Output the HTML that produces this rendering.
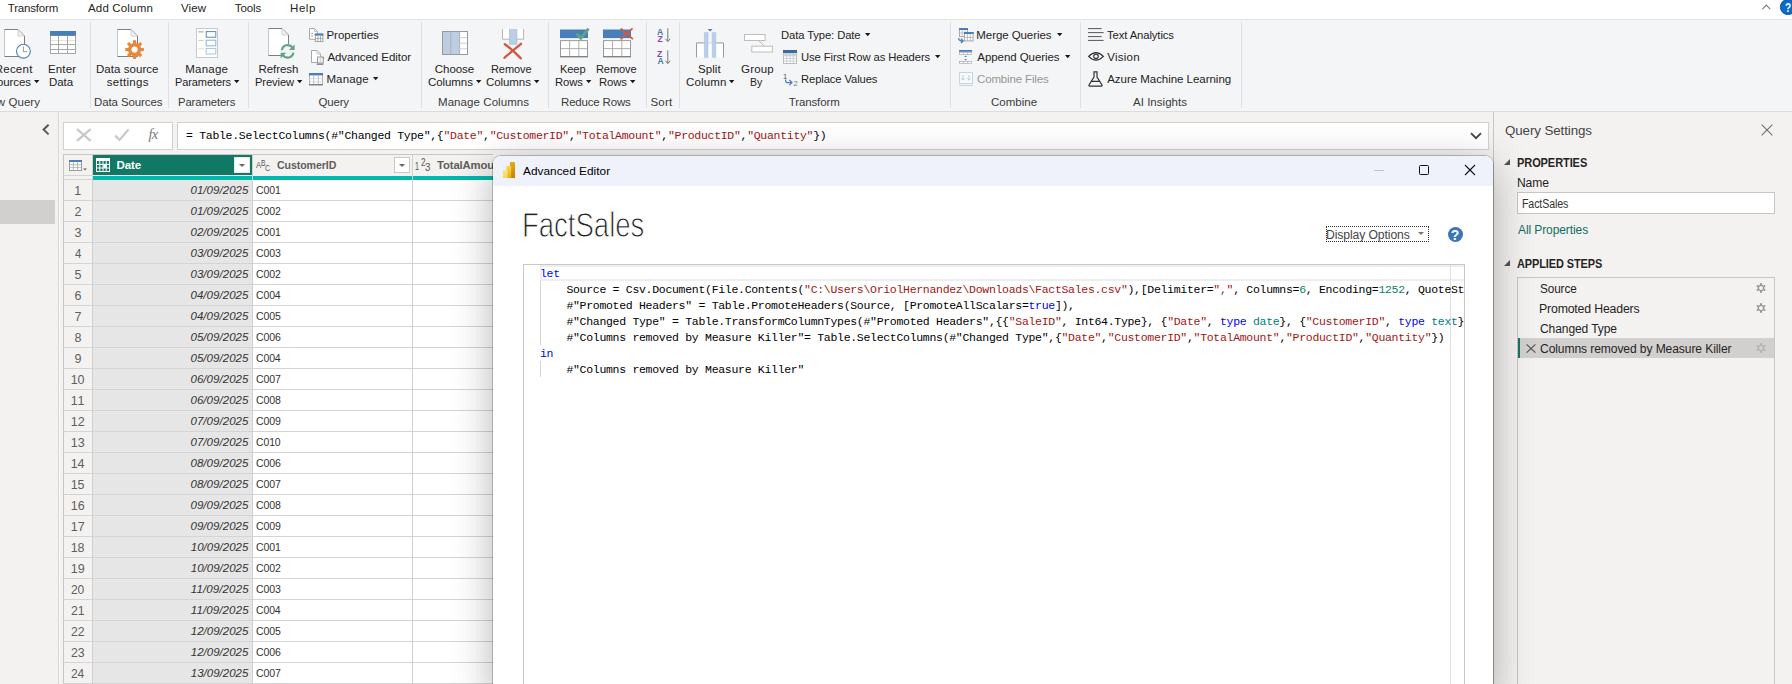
<!DOCTYPE html>
<html lang="en"><head><meta charset="utf-8"><title>Power Query Editor - Advanced Editor</title>
<style>
*{box-sizing:border-box;margin:0;padding:0}
html,body{width:1792px;height:684px;overflow:hidden;background:#f3f2f1}
body{position:relative;font-family:"Liberation Sans",sans-serif;font-size:12px;color:#252423}
.a{position:absolute}
.t{position:absolute;white-space:pre;line-height:20px;z-index:2}
.t.z{z-index:12}
#tabs{left:0;top:0;width:1792px;height:20px;background:#fff;border-bottom:1px solid #e3e3e3}
#ribbon{left:0;top:20px;width:1792px;height:92px;background:#f4f5f7;border-bottom:1px solid #dcdcdc}
.sep{position:absolute;top:22px;width:1px;height:86px;background:#e0e0e2}
.dd{position:absolute;width:0;height:0;border-left:2.5px solid transparent;border-right:2.5px solid transparent;border-top:3px solid #252423}
svg{position:absolute;overflow:visible}
/* formula */
.fbox{position:absolute;top:122px;height:28px;background:#fff;border:1px solid #d2d0ce}
.code{font-family:"Liberation Mono",monospace;font-size:11.5px;letter-spacing:-0.3px;white-space:pre;line-height:16px;color:#000}
.s{color:#a31515}.k{color:#0000ff}.n{color:#098658}.y{color:#008080}
/* grid */
#grid{left:63px;top:154px;width:430px;height:530px;background:#fff;overflow:hidden}
.hl{position:absolute;left:0;width:430px;height:1px;background:#d4d4d4}
.vl{position:absolute;top:0;width:1px;height:530px;background:#d0d0d0}
/* dialog */
#dlg{left:493px;top:156px;width:1000px;height:540px;background:#fff;border-radius:8px 8px 0 0;z-index:10;
 box-shadow:0 0 0 1px rgba(0,0,0,.22),0 10px 42px rgba(0,0,0,.30);overflow:hidden}
#dlgtitle{left:0;top:0;width:1000px;height:30px;background:#eff2fa}
#editor{left:30px;top:108px;width:942px;height:440px;border:1px solid #c8c8c8;overflow:hidden;background:#fff}
/* panel */
#panel{left:1493px;top:112px;width:299px;height:572px;background:#f3f2f1;border-left:1px solid #c8c6c4}
.thin{-webkit-text-stroke:1px #fff;paint-order:fill stroke}

</style></head>
<body>
<div class="a" id="tabs"></div>
<div class="a" id="ribbon"></div>
<div class="sep" style="left:90px"></div><div class="sep" style="left:168px"></div><div class="sep" style="left:248px"></div><div class="sep" style="left:421px"></div><div class="sep" style="left:548px"></div><div class="sep" style="left:646px"></div><div class="sep" style="left:679px"></div><div class="sep" style="left:950px"></div><div class="sep" style="left:1080px"></div><div class="sep" style="left:1241px"></div><svg style="left:34.1px;top:80px" width="6" height="4" viewBox="0 0 6 4"><path d="M0 0 H5.4 L2.7 3.2 Z" fill="#1a1a1a"/></svg><svg style="left:233.9px;top:80px" width="6" height="4" viewBox="0 0 6 4"><path d="M0 0 H5.4 L2.7 3.2 Z" fill="#1a1a1a"/></svg><svg style="left:297px;top:80px" width="6" height="4" viewBox="0 0 6 4"><path d="M0 0 H5.4 L2.7 3.2 Z" fill="#1a1a1a"/></svg><svg style="left:476.3px;top:80px" width="6" height="4" viewBox="0 0 6 4"><path d="M0 0 H5.4 L2.7 3.2 Z" fill="#1a1a1a"/></svg><svg style="left:534px;top:80px" width="6" height="4" viewBox="0 0 6 4"><path d="M0 0 H5.4 L2.7 3.2 Z" fill="#1a1a1a"/></svg><svg style="left:586px;top:80px" width="6" height="4" viewBox="0 0 6 4"><path d="M0 0 H5.4 L2.7 3.2 Z" fill="#1a1a1a"/></svg><svg style="left:630px;top:80px" width="6" height="4" viewBox="0 0 6 4"><path d="M0 0 H5.4 L2.7 3.2 Z" fill="#1a1a1a"/></svg><svg style="left:729px;top:80px" width="6" height="4" viewBox="0 0 6 4"><path d="M0 0 H5.4 L2.7 3.2 Z" fill="#1a1a1a"/></svg><svg style="left:373px;top:77px" width="6" height="4" viewBox="0 0 6 4"><path d="M0 0 H5.4 L2.7 3.2 Z" fill="#1a1a1a"/></svg><svg style="left:864.9px;top:33px" width="6" height="4" viewBox="0 0 6 4"><path d="M0 0 H5.4 L2.7 3.2 Z" fill="#1a1a1a"/></svg><svg style="left:934.8px;top:55px" width="6" height="4" viewBox="0 0 6 4"><path d="M0 0 H5.4 L2.7 3.2 Z" fill="#1a1a1a"/></svg><svg style="left:1057px;top:33px" width="6" height="4" viewBox="0 0 6 4"><path d="M0 0 H5.4 L2.7 3.2 Z" fill="#1a1a1a"/></svg><svg style="left:1065px;top:55px" width="6" height="4" viewBox="0 0 6 4"><path d="M0 0 H5.4 L2.7 3.2 Z" fill="#1a1a1a"/></svg>
<!-- left queries pane (collapsed) -->
<div class="a" style="left:0;top:200px;width:55px;height:24px;background:#d2d0ce"></div>
<div class="a" style="left:58px;top:112px;width:1px;height:572px;background:#d8d6d4"></div>
<div class="a" style="left:59px;top:112px;width:1px;height:572px;background:#faf9f8"></div>
<svg style="left:42px;top:124px" width="8" height="12" viewBox="0 0 8 12"><path d="M6.6 0.8 L1.6 5.6 L6.6 10.4" fill="none" stroke="#555" stroke-width="2"/></svg>
<!-- formula bar -->
<div class="fbox" style="left:63px;width:110px"></div>
<div class="fbox" style="left:177px;width:1312px"></div>
<svg style="left:76px;top:128px" width="16" height="14" viewBox="0 0 16 14"><path d="M1 1.2 L14.6 12.8 M14.6 1.2 L1 12.8" stroke="#c8c8c8" stroke-width="2.2" fill="none"/></svg>
<svg style="left:114px;top:128px" width="16" height="14" viewBox="0 0 16 14"><path d="M1.2 7.6 L5.6 12 L14.6 1.4" stroke="#c8c8c8" stroke-width="2.2" fill="none"/></svg>
<span class="t" style="left:148.5px;top:124px;font-family:'Liberation Serif',serif;font-style:italic;font-size:14.5px;color:#7a7a7a;letter-spacing:-0.8px">fx</span>
<span class="t code" style="left:186px;top:128px">= Table.SelectColumns(#"Changed Type",{<span class="s">"Date"</span>,<span class="s">"CustomerID"</span>,<span class="s">"TotalAmount"</span>,<span class="s">"ProductID"</span>,<span class="s">"Quantity"</span>})</span>
<svg style="left:1470px;top:132px" width="12" height="8" viewBox="0 0 12 8"><path d="M1 1.2 L6 6.2 L11 1.2" fill="none" stroke="#444" stroke-width="1.8"/></svg>
<!-- grid -->
<div class="a" id="grid">
<div class="a" style="left:0;top:0;width:430px;height:1px;background:#c8c6c4"></div>
<div class="a" style="left:0;top:1px;width:430px;height:21px;background:#f3f2f1"></div>
<div class="a" style="left:0;top:22px;width:29px;height:510px;background:#f3f2f1"></div>
<div class="a" style="left:30px;top:26px;width:159px;height:510px;background:#e6e6e6"></div>
<div class="a" style="left:30px;top:1px;width:159px;height:20px;background:#117865"></div>
<div class="a" style="left:30px;top:22px;width:400px;height:4px;background:#01b8aa"></div>
<div class="a" style="left:0;top:0;width:1px;height:530px;background:#c8c6c4"></div>
<div class="a" style="left:0;top:21px;width:29px;height:1px;background:#d4d4d4"></div>
<div class="a" style="left:0;top:25px;width:29px;height:1px;background:#d4d4d4"></div>
<div class="hl" style="top:46px"></div>
<div class="hl" style="top:67px"></div>
<div class="hl" style="top:88px"></div>
<div class="hl" style="top:109px"></div>
<div class="hl" style="top:130px"></div>
<div class="hl" style="top:151px"></div>
<div class="hl" style="top:172px"></div>
<div class="hl" style="top:193px"></div>
<div class="hl" style="top:214px"></div>
<div class="hl" style="top:235px"></div>
<div class="hl" style="top:256px"></div>
<div class="hl" style="top:277px"></div>
<div class="hl" style="top:298px"></div>
<div class="hl" style="top:319px"></div>
<div class="hl" style="top:340px"></div>
<div class="hl" style="top:361px"></div>
<div class="hl" style="top:382px"></div>
<div class="hl" style="top:403px"></div>
<div class="hl" style="top:424px"></div>
<div class="hl" style="top:445px"></div>
<div class="hl" style="top:466px"></div>
<div class="hl" style="top:487px"></div>
<div class="hl" style="top:508px"></div>
<div class="hl" style="top:529px"></div>
<div class="vl" style="left:29px"></div>
<div class="vl" style="left:189px"></div>
<div class="vl" style="left:349px"></div>
<div class="a" style="left:171px;top:3px;width:16px;height:16px;background:#fff;border:1px solid #e8e8e8"></div>
<div class="dd" style="left:175.5px;top:9.5px;border-top-color:#666;border-left-width:3.3px;border-right-width:3.3px;border-top-width:3.3px"></div>
<div class="a" style="left:331px;top:3px;width:16px;height:16px;background:#fff;border:1px solid #c8c8c8"></div>
<div class="dd" style="left:335.5px;top:9.5px;border-top-color:#666;border-left-width:3.3px;border-right-width:3.3px;border-top-width:3.3px"></div>
</div>
<!-- right panel -->
<div class="a" id="panel"></div>
<div class="a" style="left:1517px;top:192px;width:258px;height:22px;background:#fff;border:1px solid #c8c6c4"></div>
<div class="a" style="left:1517px;top:277px;width:258px;height:420px;border:1px solid #c8c6c4"></div>
<div class="a" style="left:1518px;top:338px;width:256px;height:20px;background:#d2d0ce"></div>
<div class="a" style="left:1518px;top:338px;width:2px;height:20px;background:#117865"></div>
<svg style="left:1504.3px;top:158.8px" width="6" height="6" viewBox="0 0 6 6"><path d="M6 0 L6 6 L0 6 Z" fill="#555"/></svg>
<svg style="left:1504.3px;top:260.3px" width="6" height="6" viewBox="0 0 6 6"><path d="M6 0 L6 6 L0 6 Z" fill="#555"/></svg>
<svg style="left:1761px;top:124px" width="12" height="12" viewBox="0 0 12 12"><path d="M0.6 0.6 L11.4 11.4 M11.4 0.6 L0.6 11.4" stroke="#6c6c6c" stroke-width="1.05" fill="none"/></svg>
<svg style="left:1525.5px;top:344px" width="10" height="9" viewBox="0 0 10 9"><path d="M0.6 0.4 L9.4 8.6 M9.4 0.4 L0.6 8.6" stroke="#555" stroke-width="1.2" fill="none"/></svg>
<svg style="left:1756.2px;top:282.7px" width="10" height="10" viewBox="-5 -5 10 10"><g fill="#969696"><path d="M-1.1 -3 L-0.7 -5 H0.7 L1.1 -3 Z" transform="rotate(0)"/><path d="M-1.1 -3 L-0.7 -5 H0.7 L1.1 -3 Z" transform="rotate(60)"/><path d="M-1.1 -3 L-0.7 -5 H0.7 L1.1 -3 Z" transform="rotate(120)"/><path d="M-1.1 -3 L-0.7 -5 H0.7 L1.1 -3 Z" transform="rotate(180)"/><path d="M-1.1 -3 L-0.7 -5 H0.7 L1.1 -3 Z" transform="rotate(240)"/><path d="M-1.1 -3 L-0.7 -5 H0.7 L1.1 -3 Z" transform="rotate(300)"/></g><circle r="2.6" fill="none" stroke="#969696" stroke-width="1.3"/></svg>
<svg style="left:1756.2px;top:302.7px" width="10" height="10" viewBox="-5 -5 10 10"><g fill="#969696"><path d="M-1.1 -3 L-0.7 -5 H0.7 L1.1 -3 Z" transform="rotate(0)"/><path d="M-1.1 -3 L-0.7 -5 H0.7 L1.1 -3 Z" transform="rotate(60)"/><path d="M-1.1 -3 L-0.7 -5 H0.7 L1.1 -3 Z" transform="rotate(120)"/><path d="M-1.1 -3 L-0.7 -5 H0.7 L1.1 -3 Z" transform="rotate(180)"/><path d="M-1.1 -3 L-0.7 -5 H0.7 L1.1 -3 Z" transform="rotate(240)"/><path d="M-1.1 -3 L-0.7 -5 H0.7 L1.1 -3 Z" transform="rotate(300)"/></g><circle r="2.6" fill="none" stroke="#969696" stroke-width="1.3"/></svg>
<svg style="left:1756.2px;top:342.7px" width="10" height="10" viewBox="-5 -5 10 10"><g fill="#b4b4b4"><path d="M-1.1 -3 L-0.7 -5 H0.7 L1.1 -3 Z" transform="rotate(0)"/><path d="M-1.1 -3 L-0.7 -5 H0.7 L1.1 -3 Z" transform="rotate(60)"/><path d="M-1.1 -3 L-0.7 -5 H0.7 L1.1 -3 Z" transform="rotate(120)"/><path d="M-1.1 -3 L-0.7 -5 H0.7 L1.1 -3 Z" transform="rotate(180)"/><path d="M-1.1 -3 L-0.7 -5 H0.7 L1.1 -3 Z" transform="rotate(240)"/><path d="M-1.1 -3 L-0.7 -5 H0.7 L1.1 -3 Z" transform="rotate(300)"/></g><circle r="2.6" fill="none" stroke="#b4b4b4" stroke-width="1.3"/></svg>
<!-- dialog -->
<div class="a" id="dlg">
 <div class="a" id="dlgtitle"></div>
 <div class="a" id="editor">
<div class="a" style="left:16px;top:0;width:930px;height:16px;border-top:2px solid #eee;border-bottom:2px solid #eee;border-left:2px solid #eee"></div>
<div class="a" style="left:926px;top:0;width:1px;height:440px;background:#e0e0e0"></div>
<div class="a" style="left:16px;top:16px;width:1px;height:64px;background:#d3d3d3"></div>
<div class="a" style="left:16px;top:96px;width:1px;height:16px;background:#d3d3d3"></div>
<div class="a code" style="left:16px;top:1px;height:16px"><span class="k">let</span></div>
<div class="a code" style="left:16px;top:17px;height:16px">    Source = Csv.Document(File.Contents(<span class="s">"C:\Users\OriolHernandez\Downloads\FactSales.csv"</span>),[Delimiter=<span class="s">","</span>, Columns=<span class="n">6</span>, Encoding=<span class="n">1252</span>, QuoteStyle=QuoteStyle.None]),</div>
<div class="a code" style="left:16px;top:33px;height:16px">    #"Promoted Headers" = Table.PromoteHeaders(Source, [PromoteAllScalars=<span class="k">true</span>]),</div>
<div class="a code" style="left:16px;top:49px;height:16px">    #"Changed Type" = Table.TransformColumnTypes(#"Promoted Headers",{{<span class="s">"SaleID"</span>, Int64.Type}, {<span class="s">"Date"</span>, <span class="k">type</span> <span class="y">date</span>}, {<span class="s">"CustomerID"</span>, <span class="k">type</span> <span class="y">text</span>}, {<span class="s">"ProductID"</span>, <span class="k">type</span> <span class="y">text</span>}}),</div>
<div class="a code" style="left:16px;top:65px;height:16px">    #"Columns removed by Measure Killer"= Table.SelectColumns(#"Changed Type",{<span class="s">"Date"</span>,<span class="s">"CustomerID"</span>,<span class="s">"TotalAmount"</span>,<span class="s">"ProductID"</span>,<span class="s">"Quantity"</span>})</div>
<div class="a code" style="left:16px;top:81px;height:16px"><span class="k">in</span></div>
<div class="a code" style="left:16px;top:97px;height:16px">    #"Columns removed by Measure Killer"</div>
 </div>
</div>
<svg style="left:503px;top:162px;z-index:12;" width="12" height="16" viewBox="0 0 12 16"><defs><linearGradient id="pb1" x1="0" y1="0" x2="0" y2="1"><stop offset="0" stop-color="#e6ad10"/><stop offset="1" stop-color="#c87e0e"/></linearGradient><linearGradient id="pb2" x1="0" y1="0" x2="0" y2="1"><stop offset="0" stop-color="#f6d751"/><stop offset="1" stop-color="#e6ad10"/></linearGradient><linearGradient id="pb3" x1="0" y1="0" x2="0" y2="1"><stop offset="0" stop-color="#f9e589"/><stop offset="1" stop-color="#f6d751"/></linearGradient></defs><rect x="7" y="0" width="5" height="16" rx="0.6" fill="url(#pb1)"/><rect x="3.4" y="4" width="4.8" height="12" rx="0.6" fill="url(#pb2)"/><rect x="0" y="8" width="4.6" height="8" rx="0.6" fill="url(#pb3)"/></svg>
<div class="a" style="left:1374px;top:170px;width:10px;height:1px;background:#c4c4c8;z-index:12;"></div>
<div class="a" style="left:1419px;top:165px;width:10px;height:10px;border:1px solid #111;border-radius:1.5px;z-index:12;"></div>
<svg style="left:1465px;top:164.5px;z-index:12;" width="10" height="10" viewBox="0 0 10 10"><path d="M0 0 L10 10 M10 0 L0 10" stroke="#111" stroke-width="1.1" fill="none"/></svg>
<div class="a" style="left:1326px;top:226px;width:103px;height:16px;border:1px dotted #333;z-index:12;"></div>
<div class="dd" style="left:1417.5px;top:232px;border-top-color:#777;border-left-width:3.2px;border-right-width:3.2px;border-top-width:3.2px;z-index:12;"></div>
<div class="a" style="left:1447.5px;top:226.5px;width:15px;height:15px;border-radius:50%;background:#3a76b8;z-index:12;"></div>
<svg style="left:4px;top:29px;" width="28" height="31" viewBox="0 0 28 31"><path d="M0.5 0.5 H14 L20.5 7 V27.5 H0.5 Z" fill="#fff"/><path d="M0.5 27.5 V0.5" fill="none" stroke="#c6c6c6" stroke-width="1"/><path d="M0.5 0.5 H14 L20.5 7 V27.5 H0.5" fill="none" stroke="#7d7d7d" stroke-width="1"/><path d="M14 0.8 V7 H20.2" fill="#f0f0f0" stroke="#d2d2d2" stroke-width="1"/><circle cx="19.4" cy="22.2" r="6.9" fill="#fff" stroke="#4a7ebb" stroke-width="1.1"/><path d="M19.4 17.5 V22.7 H23.2" fill="none" stroke="#999" stroke-width="1"/></svg>
<svg style="left:50px;top:31px;" width="26" height="23" viewBox="0 0 26 23"><rect x="0.5" y="0.5" width="25" height="22" fill="#fff"/><rect x="0" y="0" width="26" height="4.9" fill="#4a7ebb"/><path d="M0.5 4.9 V23 M8.5 4.9 V23 M17.5 4.9 V23 M25.5 4.9 V23 M0 13.5 H26 M0 18.5 H26 M0 22.5 H26" stroke="#a6a6a6" stroke-width="1" fill="none"/><path d="M1 9.5 H8 M9 9.5 H17 M18 9.5 H25" stroke="#e2e2e2" stroke-width="1"/></svg>
<svg style="left:117px;top:29px;" width="30" height="31" viewBox="0 0 30 31"><path d="M0.5 0.5 H14 L20.5 7 V27.5 H0.5 Z" fill="#fff"/><path d="M0.5 27.5 V0.5" fill="none" stroke="#c6c6c6" stroke-width="1"/><path d="M0.5 0.5 H14 L20.5 7 V27.5 H0.5" fill="none" stroke="#7d7d7d" stroke-width="1"/><path d="M14 0.8 V7 H20.2" fill="#f0f0f0" stroke="#d2d2d2" stroke-width="1"/><path d="M15.90 14.22 L16.09 11.32 L19.11 11.32 L19.30 14.22 L20.91 14.89 L23.09 12.97 L25.23 15.11 L23.31 17.29 L23.98 18.90 L26.88 19.09 L26.88 22.11 L23.98 22.30 L23.31 23.91 L25.23 26.09 L23.09 28.23 L20.91 26.31 L19.30 26.98 L19.11 29.88 L16.09 29.88 L15.90 26.98 L14.29 26.31 L12.11 28.23 L9.97 26.09 L11.89 23.91 L11.22 22.30 L8.32 22.11 L8.32 19.09 L11.22 18.90 L11.89 17.29 L9.97 15.11 L12.11 12.97 L14.29 14.89 Z" fill="#e8873a"/><circle cx="17.6" cy="20.6" r="3.1" fill="#fff"/></svg>
<svg style="left:196px;top:28px;" width="22" height="30" viewBox="0 0 22 30"><rect x="0.5" y="0.5" width="21" height="29" fill="#fff" stroke="#c9c9c9"/><rect x="10.2" y="3.6" width="9.6" height="5.6" fill="#fff" stroke="#5b8ac4" stroke-width="1"/><path d="M2.4 3.9 H7.6" stroke="#999" stroke-width="1"/><rect x="10.2" y="12.2" width="9.6" height="5.6" fill="#fff" stroke="#8fb0d8" stroke-width="1"/><path d="M2.4 12.5 H7.6" stroke="#ccc" stroke-width="1"/><rect x="10.2" y="20.4" width="9.6" height="5.6" fill="#fff" stroke="#a9c2e0" stroke-width="1"/><path d="M2.4 20.7 H7.6" stroke="#ddd" stroke-width="1"/></svg>
<svg style="left:268px;top:28px;" width="30" height="31" viewBox="0 0 30 31"><path d="M0.5 0.5 H14 L20.5 7 V27.5 H0.5 Z" fill="#fff"/><path d="M0.5 27.5 V0.5" fill="none" stroke="#c6c6c6" stroke-width="1"/><path d="M0.5 0.5 H14 L20.5 7 V27.5 H0.5" fill="none" stroke="#7d7d7d" stroke-width="1"/><path d="M14 0.8 V7 H20.2" fill="#f0f0f0" stroke="#d2d2d2" stroke-width="1"/><circle cx="19.6" cy="23.4" r="7.6" fill="#f3f4f6"/><path d="M13.9 22.2 A5.8 5.8 0 0 1 24.4 19.6" fill="none" stroke="#5fa583" stroke-width="2.2"/><path d="M26.6 16.4 V22 H21 Z" fill="#5fa583"/><path d="M25.3 24.6 A5.8 5.8 0 0 1 14.8 27.2" fill="none" stroke="#5fa583" stroke-width="2.2"/><path d="M12.6 30.4 V24.8 H18.2 Z" fill="#5fa583"/></svg>
<svg style="left:309px;top:28px;" width="15" height="15" viewBox="0 0 15 15"><path d="M0.5 0.5 H5.4 L8.4 3.5 V11.3 H0.5 Z" fill="#fff" stroke="#a8a8a8"/><path d="M5.4 0.5 V3.5 H8.4" fill="none" stroke="#bbb" stroke-width="0.8"/><path d="M2.3 5.4 H4 M2.3 8 H4" stroke="#999"/><rect x="6.3" y="6" width="7.6" height="7.6" fill="#fff" stroke="#9a9a9a" stroke-width="0.9"/><rect x="5.8" y="5.6" width="8.6" height="2" fill="#4a7ebb"/><path d="M8.9 7.6 V13.6 M11.5 7.6 V13.6 M6.3 10.6 H13.9" stroke="#9a9a9a" stroke-width="0.8"/></svg>
<svg style="left:310.5px;top:50px;" width="14" height="15" viewBox="0 0 14 15"><path d="M0.5 0.5 H6 L9.5 4 V12.5 H0.5 Z" fill="#fff" stroke="#a8a8a8"/><path d="M6 0.5 V4 H9.5" fill="none" stroke="#c4c4c4"/><rect x="6.6" y="7" width="5.6" height="6" fill="#fff" stroke="#8a8a8a" stroke-width="0.9"/><path d="M8.5 9 H10.4 M8.5 11 H10.4" stroke="#999" stroke-width="0.8"/><path d="M5.6 14.2 H12.4" stroke="#777" stroke-width="1.2"/><path d="M11.2 7.6 L13.2 7.2 L12.6 9.2 Z" fill="#888"/></svg>
<svg style="left:309px;top:72.6px;" width="14" height="13" viewBox="0 0 14 13"><rect x="0.5" y="0.5" width="13" height="11.2" fill="#fff" stroke="#b0b0b0"/><rect x="0" y="0" width="14" height="2.4" fill="#4a7ebb"/><path d="M4.7 2.4 V11.6 M9.3 2.4 V11.6" stroke="#b5b5b5" stroke-width="0.9"/><path d="M0.5 5.6 H13.5 M0.5 8.8 H13.5" stroke="#d0d0d0" stroke-width="0.8"/><path d="M0 11.8 H14" stroke="#666" stroke-width="1"/></svg>
<svg style="left:442px;top:31px;" width="26" height="24" viewBox="0 0 26 24"><rect x="0.5" y="0.5" width="25" height="23" fill="#fff" stroke="#9a9a9a"/><rect x="1" y="1" width="16.6" height="22" fill="#b9cfe8"/><path d="M8.7 1 V23 M17.6 1 V23" stroke="#a9a9a9" stroke-width="0.9"/><path d="M1 6.6 H25 M1 12.2 H25 M1 17.8 H25" stroke="#c9c9c9" stroke-width="0.9"/></svg>
<svg style="left:502px;top:29px;" width="23" height="30" viewBox="0 0 23 30"><path d="M0.5 0 V10.2 H21.6 V0" fill="#fff" stroke="#b4b4b4"/><path d="M7.6 0 H14.8 V16 H7.6 Z" fill="#b9cfe8"/><path d="M7.6 0 V15 M14.8 0 V15" stroke="#a9b9cf" stroke-width="0.8"/><path d="M2.8 15.2 C7 18 14 24.5 18.8 29.4 M19 14.8 C14 18.8 8 24 2.4 28.8" fill="none" stroke="#d4583c" stroke-width="2.3" stroke-linecap="round"/></svg>
<svg style="left:559.8px;top:27.5px;" width="30" height="30" viewBox="0 0 30 30"><rect x="0" y="1.5" width="28" height="8.6" fill="#4a7ebb"/><rect x="0.5" y="12.6" width="27" height="16" fill="#fff" stroke="#9a9a9a"/><path d="M9.6 13 V28.6 M18.8 13 V28.6 M0.5 20.6 H27.5" stroke="#a5a5a5" stroke-width="0.9"/><path d="M0 28.8 H28" stroke="#777"/><path d="M16.6 5.6 L20.8 10.4 L28.6 0.6" fill="none" stroke="#5fa583" stroke-width="2.7"/></svg>
<svg style="left:602.5px;top:27.5px;" width="31" height="30" viewBox="0 0 31 30"><rect x="0" y="1.5" width="28" height="8.6" fill="#4a7ebb"/><rect x="0.5" y="12.6" width="27" height="16" fill="#fff" stroke="#9a9a9a"/><path d="M9.6 13 V28.6 M18.8 13 V28.6 M0.5 20.6 H27.5" stroke="#a5a5a5" stroke-width="0.9"/><path d="M0 28.8 H28" stroke="#777"/><path d="M18.2 1 L29.4 10.6 M29 0.8 L18.2 10.8" fill="none" stroke="#d4583c" stroke-width="1.8" stroke-linecap="round"/></svg>
<svg style="left:656.6px;top:28px;" width="14" height="15" viewBox="0 0 14 15"><text x="0" y="7" font-family="Liberation Sans, sans-serif" font-size="8.6" font-weight="700" fill="#3f78b5">A</text><text x="0.4" y="14.2" font-family="Liberation Sans, sans-serif" font-size="8.6" font-weight="700" fill="#8e44ad">Z</text><path d="M10.8 0.4 V13.4 M8.4 10.8 L10.8 13.6 L13.2 10.8" fill="none" stroke="#777" stroke-width="1"/></svg>
<svg style="left:656.6px;top:50px;" width="14" height="15" viewBox="0 0 14 15"><text x="0" y="7" font-family="Liberation Sans, sans-serif" font-size="8.6" font-weight="700" fill="#8e44ad">Z</text><text x="0.4" y="14.2" font-family="Liberation Sans, sans-serif" font-size="8.6" font-weight="700" fill="#3f78b5">A</text><path d="M10.8 0.4 V13.4 M8.4 10.8 L10.8 13.6 L13.2 10.8" fill="none" stroke="#777" stroke-width="1"/></svg>
<svg style="left:696px;top:28px;" width="28" height="30" viewBox="0 0 28 30"><path d="M0.5 29.5 V14.9 H27.5 V29.5" fill="#fff" stroke="#9a9a9a"/><rect x="8.4" y="4.2" width="3.6" height="25.6" fill="#b9cfe8"/><rect x="16.2" y="4.2" width="3.6" height="25.6" fill="#b9cfe8"/><path d="M8.4 4.2 V29.6 M12 4.2 V29.6 M16.2 4.2 V29.6 M19.8 4.2 V29.6" stroke="#a9bfdc" stroke-width="0.6"/><rect x="12" y="14.4" width="4.2" height="1.2" fill="#f3f4f6"/><path d="M11.6 1 H16.6 L14.1 3.4 Z" fill="#4a7ebb"/></svg>
<svg style="left:744px;top:33.5px;" width="29" height="19" viewBox="0 0 29 19"><rect x="0.5" y="0.5" width="20.6" height="6" fill="#fff" stroke="#bdbdbd"/><rect x="7.8" y="12.2" width="20.6" height="5.8" fill="#fff" stroke="#bdbdbd"/><path d="M14.6 6.5 L20.2 12.2" stroke="#bdbdbd" stroke-width="1" fill="none"/></svg>
<svg style="left:783px;top:50px;" width="14" height="14" viewBox="0 0 14 14"><rect x="0.5" y="0.5" width="13" height="13" fill="#fff" stroke="#bdbdbd"/><rect x="0" y="0" width="14" height="3" fill="#41699c"/><rect x="0.6" y="3" width="12.8" height="2.6" fill="#c9daee"/><path d="M3.7 3 V13.5 M7 3 V13.5 M10.3 3 V13.5 M0.5 5.8 H13.5 M0.5 8.4 H13.5 M0.5 11 H13.5" stroke="#c4c4c4" stroke-width="0.8"/></svg>
<svg style="left:783px;top:72px;" width="15" height="14" viewBox="0 0 15 14"><text x="0" y="6.6" font-family="Liberation Sans, sans-serif" font-size="7.5" fill="#555">1</text><text x="10.4" y="13.6" font-family="Liberation Sans, sans-serif" font-size="7.5" fill="#777">2</text><path d="M2.6 7.6 V8.4 Q2.6 10.6 5 10.6 H8.6 M6.4 8 L9 10.6 L6.4 13.2" fill="none" stroke="#4a7ebb" stroke-width="1.2"/></svg>
<svg style="left:958px;top:28px;" width="16" height="15" viewBox="0 0 16 15"><rect x="1.5" y="0.5" width="8" height="8" fill="#fff" stroke="#a8a8a8"/><rect x="1" y="0" width="9" height="2" fill="#4a7ebb"/><path d="M4.2 2 V8.5 M7 2 V8.5 M1.5 5 H9.5" stroke="#b0b0b0" stroke-width="0.8"/><rect x="6.5" y="4.5" width="8.6" height="8.4" fill="#fff" stroke="#a8a8a8"/><rect x="6" y="4" width="9.6" height="2" fill="#4a7ebb"/><path d="M9.4 6 V13 M12.3 6 V13 M6.5 9.4 H15" stroke="#b0b0b0" stroke-width="0.8"/><path d="M0.6 10 Q0.8 13 4.6 13 M3 10.8 L5.2 13 L3 15" fill="none" stroke="#4a7ebb" stroke-width="1.3"/></svg>
<svg style="left:959px;top:50px;" width="13" height="14" viewBox="0 0 13 14"><rect x="0" y="0" width="13" height="1.8" fill="#4a7ebb"/><rect x="0.4" y="2.6" width="12.2" height="1.8" fill="#fff" stroke="#aaa" stroke-width="0.7"/><path d="M4.4 2.6 V4.4 M8.6 2.6 V4.4" stroke="#aaa" stroke-width="0.7"/><path d="M6.6 5.6 L8 7 H5.2 Z M6.6 10.4 L8 9 H5.2 Z" fill="#4a7ebb"/><rect x="0.4" y="11.4" width="12.2" height="1.9" fill="#fff" stroke="#aaa" stroke-width="0.7"/><path d="M4.4 11.4 V13.3 M8.6 11.4 V13.3" stroke="#aaa" stroke-width="0.7"/></svg>
<svg style="left:959px;top:72px;" width="14" height="14" viewBox="0 0 14 14"><rect x="0.5" y="0.5" width="13" height="11" fill="#f7f9fc" stroke="#c5d3e6"/><path d="M0 13.4 H14" stroke="#c5d3e6" stroke-width="1"/><path d="M4 3 V8 M2.4 6.4 L4 8.2 L5.6 6.4 M10 3 V8 M8.4 6.4 L10 8.2 L11.6 6.4" fill="none" stroke="#b4c6de" stroke-width="0.9"/></svg>
<svg style="left:1088px;top:28px;" width="16" height="13" viewBox="0 0 16 13"><path d="M0 0.6 H13.6 M0 4.6 H15.6 M0 8.6 H13.6 M0 12.4 H15.6" stroke="#444" stroke-width="0.9"/></svg>
<svg style="left:1088px;top:52px;" width="16" height="9" viewBox="0 0 16 9"><path d="M0.6 4.4 Q8 -3.2 15.4 4.4 Q8 12 0.6 4.4 Z" fill="none" stroke="#333" stroke-width="1.2"/><circle cx="8" cy="4.4" r="2.3" fill="none" stroke="#333" stroke-width="1.2"/></svg>
<svg style="left:1088px;top:71px;" width="15" height="16" viewBox="0 0 15 16"><path d="M5.4 0.8 H9.6 M6 0.8 V6 L1 14 Q0.6 15.2 2 15.2 H13 Q14.4 15.2 14 14 L9 6 V0.8 M3.4 10.4 H11.6" fill="none" stroke="#333" stroke-width="1.2"/></svg>
<svg style="left:69px;top:159.5px;" width="19" height="12" viewBox="0 0 19 12"><rect x="0.5" y="0.5" width="12" height="10" fill="#fff" stroke="#9a9a9a"/><rect x="0" y="0" width="13" height="2" fill="#4a7ebb"/><path d="M4.4 2 V10.5 M8.6 2 V10.5 M0.5 4.8 H12.5 M0.5 7.6 H12.5" stroke="#aaa" stroke-width="0.8"/><path d="M14 8.4 H18 L16 10.6 Z" fill="#666"/></svg>
<svg style="left:96px;top:158px;" width="14" height="14" viewBox="0 0 14 14"><rect x="0.5" y="0.5" width="13" height="13" fill="none" stroke="#fff"/><rect x="0" y="0" width="14" height="3" fill="#fff"/><path d="M3.8 2 V13.5 M7 2 V13.5 M10.2 2 V13.5 M0.5 6.4 H13.5 M0.5 10 H13.5" stroke="#fff" stroke-width="1"/><rect x="7.4" y="6.6" width="3.2" height="3.2" fill="#fff"/></svg>
<svg style="left:1761.7px;top:3.9px;" width="9" height="6" viewBox="0 0 9 6"><path d="M0.4 5.1 L4.3 1.1 L8.2 5.1" fill="none" stroke="#7c7c7c" stroke-width="1.15"/></svg>
<div class="a" style="left:1780.2px;top:-0.8px;width:15.4px;height:15.4px;border-radius:50%;background:#0b6bc6;border:1px solid #0a50a0"></div>
<span class="t " style='left:7.75px;top:-2px;font-size:11.5px;color:#252423;letter-spacing:-0.188px;'>Transform</span>
<span class="t " style='left:88.00px;top:-2px;font-size:11.5px;color:#252423;letter-spacing:0.167px;'>Add Column</span>
<span class="t " style='left:181.00px;top:-2px;font-size:11.5px;color:#252423;letter-spacing:0.083px;'>View</span>
<span class="t " style='left:234.75px;top:-2px;font-size:11.5px;color:#252423;letter-spacing:-0.062px;'>Tools</span>
<span class="t " style='left:290.00px;top:-2px;font-size:11.5px;color:#252423;letter-spacing:0.583px;'>Help</span>
<span class="t " style='left:-5.30px;top:59px;font-size:11.5px;color:#252423;letter-spacing:0.240px;'>Recent</span>
<span class="t " style='left:-10.50px;top:72px;font-size:11.5px;color:#252423;letter-spacing:-0.125px;'>Sources</span>
<span class="t " style='left:48.00px;top:59px;font-size:11.5px;color:#252423;letter-spacing:0.125px;'>Enter</span>
<span class="t " style='left:49.00px;top:72px;font-size:11.5px;color:#252423;letter-spacing:-0.083px;'>Data</span>
<span class="t " style='left:96.00px;top:59px;font-size:11.5px;color:#252423;letter-spacing:0.050px;'>Data source</span>
<span class="t " style='left:106.75px;top:72px;font-size:11.5px;color:#252423;letter-spacing:0.286px;'>settings</span>
<span class="t " style='left:185.30px;top:59px;font-size:11.5px;color:#252423;letter-spacing:0.210px;'>Manage</span>
<span class="t " style='left:174.74px;top:72px;font-size:11.5px;color:#252423;transform:scaleX(0.9562);transform-origin:0 0;letter-spacing:-0.100px;'>Parameters</span>
<span class="t " style='left:258.50px;top:59px;font-size:11.5px;color:#252423;letter-spacing:-0.067px;'>Refresh</span>
<span class="t " style='left:254.53px;top:72px;font-size:11.5px;color:#252423;transform:scaleX(0.9721);transform-origin:0 0;letter-spacing:-0.100px;'>Preview</span>
<span class="t " style='left:434.80px;top:59px;font-size:11.5px;color:#252423;letter-spacing:-0.050px;'>Choose</span>
<span class="t " style='left:428.00px;top:72px;font-size:11.5px;color:#252423;letter-spacing:-0.083px;'>Columns</span>
<span class="t " style='left:491.34px;top:59px;font-size:11.5px;color:#252423;transform:scaleX(0.9585);transform-origin:0 0;letter-spacing:-0.100px;'>Remove</span>
<span class="t " style='left:485.90px;top:72px;font-size:11.5px;color:#252423;letter-spacing:-0.050px;'>Columns</span>
<span class="t " style='left:560.44px;top:59px;font-size:11.5px;color:#252423;transform:scaleX(0.9643);transform-origin:0 0;letter-spacing:-0.100px;'>Keep</span>
<span class="t " style='left:554.52px;top:72px;font-size:11.5px;color:#252423;transform:scaleX(0.9816);transform-origin:0 0;letter-spacing:-0.100px;'>Rows</span>
<span class="t " style='left:596.24px;top:59px;font-size:11.5px;color:#252423;transform:scaleX(0.9585);transform-origin:0 0;letter-spacing:-0.100px;'>Remove</span>
<span class="t " style='left:598.52px;top:72px;font-size:11.5px;color:#252423;transform:scaleX(0.9816);transform-origin:0 0;letter-spacing:-0.100px;'>Rows</span>
<span class="t " style='left:698.00px;top:59px;font-size:11.5px;color:#252423;letter-spacing:0.062px;'>Split</span>
<span class="t " style='left:686.00px;top:72px;font-size:11.5px;color:#252423;letter-spacing:0.140px;'>Column</span>
<span class="t " style='left:741.10px;top:59px;font-size:11.5px;color:#252423;letter-spacing:0.150px;'>Group</span>
<span class="t " style='left:750.28px;top:72px;font-size:11.5px;color:#252423;transform:scaleX(0.9194);transform-origin:0 0;letter-spacing:-0.100px;'>By</span>
<span class="t " style='left:326.40px;top:25px;font-size:11.5px;color:#252423;letter-spacing:0.000px;'>Properties</span>
<span class="t " style='left:327.40px;top:47px;font-size:11.5px;color:#252423;letter-spacing:-0.046px;'>Advanced Editor</span>
<span class="t " style='left:326.40px;top:69px;font-size:11.5px;color:#252423;letter-spacing:0.150px;'>Manage</span>
<span class="t " style='left:781.32px;top:25px;font-size:11.5px;color:#252423;transform:scaleX(0.9763);transform-origin:0 0;letter-spacing:-0.100px;'>Data Type: Date</span>
<span class="t " style='left:800.77px;top:47px;font-size:11.5px;color:#252423;transform:scaleX(0.9793);transform-origin:0 0;letter-spacing:-0.100px;'>Use First Row as Headers</span>
<span class="t " style='left:800.53px;top:69px;font-size:11.5px;color:#252423;transform:scaleX(0.9747);transform-origin:0 0;letter-spacing:-0.100px;'>Replace Values</span>
<span class="t " style='left:976.30px;top:25px;font-size:11.5px;color:#252423;letter-spacing:-0.071px;'>Merge Queries</span>
<span class="t " style='left:977.30px;top:47px;font-size:11.5px;color:#252423;letter-spacing:-0.065px;'>Append Queries</span>
<span class="t " style='left:977.00px;top:69px;font-size:11.5px;color:#979593;letter-spacing:-0.146px;'>Combine Files</span>
<span class="t " style='left:1106.96px;top:25px;font-size:11.5px;color:#252423;transform:scaleX(0.9793);transform-origin:0 0;letter-spacing:-0.100px;'>Text Analytics</span>
<span class="t " style='left:1107.20px;top:47px;font-size:11.5px;color:#252423;letter-spacing:0.260px;'>Vision</span>
<span class="t " style='left:1107.20px;top:69px;font-size:11.5px;color:#252423;letter-spacing:-0.033px;'>Azure Machine Learning</span>
<span class="t " style='left:-18.00px;top:92px;font-size:11.5px;color:#3b3a39;letter-spacing:0.062px;'>New Query</span>
<span class="t " style='left:94.00px;top:92px;font-size:11.5px;color:#3b3a39;letter-spacing:-0.114px;'>Data Sources</span>
<span class="t " style='left:178.02px;top:92px;font-size:11.5px;color:#3b3a39;transform:scaleX(0.9807);transform-origin:0 0;letter-spacing:-0.100px;'>Parameters</span>
<span class="t " style='left:318.50px;top:92px;font-size:11.5px;color:#3b3a39;letter-spacing:-0.188px;'>Query</span>
<span class="t " style='left:438.00px;top:92px;font-size:11.5px;color:#3b3a39;letter-spacing:0.073px;'>Manage Columns</span>
<span class="t " style='left:561.00px;top:92px;font-size:11.5px;color:#3b3a39;letter-spacing:-0.175px;'>Reduce Rows</span>
<span class="t " style='left:650.50px;top:92px;font-size:11.5px;color:#3b3a39;letter-spacing:0.167px;'>Sort</span>
<span class="t " style='left:788.75px;top:92px;font-size:11.5px;color:#3b3a39;letter-spacing:-0.125px;'>Transform</span>
<span class="t " style='left:991.00px;top:92px;font-size:11.5px;color:#3b3a39;letter-spacing:0.000px;'>Combine</span>
<span class="t " style='left:1133.00px;top:92px;font-size:11.5px;color:#3b3a39;letter-spacing:0.025px;'>AI Insights</span>
<span class="t " style='left:1504.51px;top:121px;font-size:13.7px;color:#444;transform:scaleX(0.9751);transform-origin:0 0;letter-spacing:-0.100px;'>Query Settings</span>
<span class="t " style='left:1516.93px;top:153px;font-size:12.3px;color:#252423;transform:scaleX(0.8962);transform-origin:0 0;letter-spacing:-0.100px;font-weight:700;'>PROPERTIES</span>
<span class="t " style='left:1516.62px;top:173px;font-size:12.3px;color:#252423;transform:scaleX(0.9822);transform-origin:0 0;letter-spacing:-0.100px;'>Name</span>
<span class="t " style='left:1522.44px;top:194px;font-size:12.3px;color:#333;transform:scaleX(0.8599);transform-origin:0 0;letter-spacing:-0.100px;'>FactSales</span>
<span class="t " style='left:1517.60px;top:220px;font-size:12.3px;color:#116f60;transform:scaleX(0.9769);transform-origin:0 0;letter-spacing:-0.100px;'>All Properties</span>
<span class="t " style='left:1517.38px;top:254px;font-size:12.3px;color:#252423;transform:scaleX(0.8901);transform-origin:0 0;letter-spacing:-0.100px;font-weight:700;'>APPLIED STEPS</span>
<span class="t " style='left:1539.52px;top:279px;font-size:12.3px;color:#252423;transform:scaleX(0.9547);transform-origin:0 0;letter-spacing:-0.100px;'>Source</span>
<span class="t " style='left:1539.00px;top:299px;font-size:12.3px;color:#252423;letter-spacing:-0.170px;'>Promoted Headers</span>
<span class="t " style='left:1539.51px;top:319px;font-size:12.3px;color:#252423;transform:scaleX(0.9788);transform-origin:0 0;letter-spacing:-0.100px;'>Changed Type</span>
<span class="t " style='left:1539.51px;top:339px;font-size:12.3px;color:#252423;transform:scaleX(0.9825);transform-origin:0 0;letter-spacing:-0.100px;'>Columns removed by Measure Killer</span>
<span class="t " style='left:116.55px;top:155px;font-size:11.5px;color:#fff;letter-spacing:-0.083px;font-weight:700;'>Date</span>
<span class="t " style='left:276.74px;top:155px;font-size:11.5px;color:#605e5c;transform:scaleX(0.9234);transform-origin:0 0;letter-spacing:-0.100px;font-weight:700;'>CustomerID</span>
<span class="t " style='left:437.40px;top:155px;font-size:11.5px;color:#605e5c;transform:scaleX(0.9797);transform-origin:0 0;letter-spacing:-0.100px;font-weight:700;'>TotalAmount</span>
<span class="t " style='left:74.15px;top:181px;font-size:12.5px;color:#605e5c;'>1</span>
<span class="t " style='left:190.50px;top:180px;font-size:11.5px;color:#333;letter-spacing:0.039px;font-style:italic;'>01/09/2025</span>
<span class="t " style='left:255.74px;top:180px;font-size:11.5px;color:#333;transform:scaleX(0.9160);transform-origin:0 0;letter-spacing:-0.100px;'>C001</span>
<span class="t " style='left:74.53px;top:202px;font-size:12.5px;color:#605e5c;'>2</span>
<span class="t " style='left:190.50px;top:201px;font-size:11.5px;color:#333;letter-spacing:0.039px;font-style:italic;'>01/09/2025</span>
<span class="t " style='left:255.74px;top:201px;font-size:11.5px;color:#333;transform:scaleX(0.9160);transform-origin:0 0;letter-spacing:-0.100px;'>C002</span>
<span class="t " style='left:74.40px;top:223px;font-size:12.5px;color:#605e5c;'>3</span>
<span class="t " style='left:190.50px;top:222px;font-size:11.5px;color:#333;letter-spacing:0.039px;font-style:italic;'>02/09/2025</span>
<span class="t " style='left:255.74px;top:222px;font-size:11.5px;color:#333;transform:scaleX(0.9160);transform-origin:0 0;letter-spacing:-0.100px;'>C001</span>
<span class="t " style='left:74.67px;top:244px;font-size:12.5px;color:#605e5c;transform:scaleX(0.9231);transform-origin:0 0;'>4</span>
<span class="t " style='left:190.50px;top:243px;font-size:11.5px;color:#333;letter-spacing:0.039px;font-style:italic;'>03/09/2025</span>
<span class="t " style='left:255.74px;top:243px;font-size:11.5px;color:#333;transform:scaleX(0.9160);transform-origin:0 0;letter-spacing:-0.100px;'>C003</span>
<span class="t " style='left:74.40px;top:265px;font-size:12.5px;color:#605e5c;'>5</span>
<span class="t " style='left:190.50px;top:264px;font-size:11.5px;color:#333;letter-spacing:0.039px;font-style:italic;'>03/09/2025</span>
<span class="t " style='left:255.74px;top:264px;font-size:11.5px;color:#333;transform:scaleX(0.9160);transform-origin:0 0;letter-spacing:-0.100px;'>C002</span>
<span class="t " style='left:74.40px;top:286px;font-size:12.5px;color:#605e5c;'>6</span>
<span class="t " style='left:190.50px;top:285px;font-size:11.5px;color:#333;letter-spacing:0.039px;font-style:italic;'>04/09/2025</span>
<span class="t " style='left:255.75px;top:285px;font-size:11.5px;color:#333;transform:scaleX(0.9074);transform-origin:0 0;letter-spacing:-0.100px;'>C004</span>
<span class="t " style='left:74.53px;top:307px;font-size:12.5px;color:#605e5c;'>7</span>
<span class="t " style='left:190.50px;top:306px;font-size:11.5px;color:#333;letter-spacing:0.039px;font-style:italic;'>04/09/2025</span>
<span class="t " style='left:255.74px;top:306px;font-size:11.5px;color:#333;transform:scaleX(0.9160);transform-origin:0 0;letter-spacing:-0.100px;'>C005</span>
<span class="t " style='left:74.40px;top:328px;font-size:12.5px;color:#605e5c;'>8</span>
<span class="t " style='left:190.50px;top:327px;font-size:11.5px;color:#333;letter-spacing:0.039px;font-style:italic;'>05/09/2025</span>
<span class="t " style='left:255.74px;top:327px;font-size:11.5px;color:#333;transform:scaleX(0.9160);transform-origin:0 0;letter-spacing:-0.100px;'>C006</span>
<span class="t " style='left:74.40px;top:349px;font-size:12.5px;color:#605e5c;'>9</span>
<span class="t " style='left:190.50px;top:348px;font-size:11.5px;color:#333;letter-spacing:0.039px;font-style:italic;'>05/09/2025</span>
<span class="t " style='left:255.75px;top:348px;font-size:11.5px;color:#333;transform:scaleX(0.9074);transform-origin:0 0;letter-spacing:-0.100px;'>C004</span>
<span class="t " style='left:70.70px;top:370px;font-size:12.5px;color:#605e5c;letter-spacing:-0.100px;'>10</span>
<span class="t " style='left:190.50px;top:369px;font-size:11.5px;color:#333;letter-spacing:0.039px;font-style:italic;'>06/09/2025</span>
<span class="t " style='left:255.74px;top:369px;font-size:11.5px;color:#333;transform:scaleX(0.9160);transform-origin:0 0;letter-spacing:-0.100px;'>C007</span>
<span class="t " style='left:70.70px;top:391px;font-size:12.5px;color:#605e5c;letter-spacing:0.900px;'>11</span>
<span class="t " style='left:190.50px;top:390px;font-size:11.5px;color:#333;letter-spacing:0.039px;font-style:italic;'>06/09/2025</span>
<span class="t " style='left:255.74px;top:390px;font-size:11.5px;color:#333;transform:scaleX(0.9160);transform-origin:0 0;letter-spacing:-0.100px;'>C008</span>
<span class="t " style='left:70.70px;top:412px;font-size:12.5px;color:#605e5c;letter-spacing:0.150px;'>12</span>
<span class="t " style='left:190.50px;top:411px;font-size:11.5px;color:#333;letter-spacing:0.039px;font-style:italic;'>07/09/2025</span>
<span class="t " style='left:255.74px;top:411px;font-size:11.5px;color:#333;transform:scaleX(0.9160);transform-origin:0 0;letter-spacing:-0.100px;'>C009</span>
<span class="t " style='left:70.70px;top:433px;font-size:12.5px;color:#605e5c;letter-spacing:0.150px;'>13</span>
<span class="t " style='left:190.50px;top:432px;font-size:11.5px;color:#333;letter-spacing:0.039px;font-style:italic;'>07/09/2025</span>
<span class="t " style='left:255.75px;top:432px;font-size:11.5px;color:#333;transform:scaleX(0.9074);transform-origin:0 0;letter-spacing:-0.100px;'>C010</span>
<span class="t " style='left:70.70px;top:454px;font-size:12.5px;color:#605e5c;letter-spacing:-0.100px;'>14</span>
<span class="t " style='left:190.50px;top:453px;font-size:11.5px;color:#333;letter-spacing:0.039px;font-style:italic;'>08/09/2025</span>
<span class="t " style='left:255.74px;top:453px;font-size:11.5px;color:#333;transform:scaleX(0.9160);transform-origin:0 0;letter-spacing:-0.100px;'>C006</span>
<span class="t " style='left:70.70px;top:475px;font-size:12.5px;color:#605e5c;letter-spacing:-0.100px;'>15</span>
<span class="t " style='left:190.50px;top:474px;font-size:11.5px;color:#333;letter-spacing:0.039px;font-style:italic;'>08/09/2025</span>
<span class="t " style='left:255.74px;top:474px;font-size:11.5px;color:#333;transform:scaleX(0.9160);transform-origin:0 0;letter-spacing:-0.100px;'>C007</span>
<span class="t " style='left:70.70px;top:496px;font-size:12.5px;color:#605e5c;letter-spacing:0.150px;'>16</span>
<span class="t " style='left:190.50px;top:495px;font-size:11.5px;color:#333;letter-spacing:0.039px;font-style:italic;'>09/09/2025</span>
<span class="t " style='left:255.74px;top:495px;font-size:11.5px;color:#333;transform:scaleX(0.9160);transform-origin:0 0;letter-spacing:-0.100px;'>C008</span>
<span class="t " style='left:70.70px;top:517px;font-size:12.5px;color:#605e5c;letter-spacing:0.150px;'>17</span>
<span class="t " style='left:190.50px;top:516px;font-size:11.5px;color:#333;letter-spacing:0.039px;font-style:italic;'>09/09/2025</span>
<span class="t " style='left:255.74px;top:516px;font-size:11.5px;color:#333;transform:scaleX(0.9160);transform-origin:0 0;letter-spacing:-0.100px;'>C009</span>
<span class="t " style='left:70.70px;top:538px;font-size:12.5px;color:#605e5c;letter-spacing:-0.100px;'>18</span>
<span class="t " style='left:190.75px;top:537px;font-size:11.5px;color:#333;letter-spacing:0.011px;font-style:italic;'>10/09/2025</span>
<span class="t " style='left:255.74px;top:537px;font-size:11.5px;color:#333;transform:scaleX(0.9160);transform-origin:0 0;letter-spacing:-0.100px;'>C001</span>
<span class="t " style='left:70.70px;top:559px;font-size:12.5px;color:#605e5c;letter-spacing:0.150px;'>19</span>
<span class="t " style='left:190.75px;top:558px;font-size:11.5px;color:#333;letter-spacing:0.011px;font-style:italic;'>10/09/2025</span>
<span class="t " style='left:255.74px;top:558px;font-size:11.5px;color:#333;transform:scaleX(0.9160);transform-origin:0 0;letter-spacing:-0.100px;'>C002</span>
<span class="t " style='left:71.22px;top:580px;font-size:12.5px;color:#605e5c;transform:scaleX(0.9612);transform-origin:0 0;letter-spacing:-0.100px;'>20</span>
<span class="t " style='left:190.75px;top:579px;font-size:11.5px;color:#333;letter-spacing:0.122px;font-style:italic;'>11/09/2025</span>
<span class="t " style='left:255.74px;top:579px;font-size:11.5px;color:#333;transform:scaleX(0.9160);transform-origin:0 0;letter-spacing:-0.100px;'>C003</span>
<span class="t " style='left:71.21px;top:601px;font-size:12.5px;color:#605e5c;transform:scaleX(0.9802);transform-origin:0 0;letter-spacing:-0.100px;'>21</span>
<span class="t " style='left:190.75px;top:600px;font-size:11.5px;color:#333;letter-spacing:0.122px;font-style:italic;'>11/09/2025</span>
<span class="t " style='left:255.75px;top:600px;font-size:11.5px;color:#333;transform:scaleX(0.9074);transform-origin:0 0;letter-spacing:-0.100px;'>C004</span>
<span class="t " style='left:71.21px;top:622px;font-size:12.5px;color:#605e5c;transform:scaleX(0.9802);transform-origin:0 0;letter-spacing:-0.100px;'>22</span>
<span class="t " style='left:190.75px;top:621px;font-size:11.5px;color:#333;letter-spacing:0.011px;font-style:italic;'>12/09/2025</span>
<span class="t " style='left:255.74px;top:621px;font-size:11.5px;color:#333;transform:scaleX(0.9160);transform-origin:0 0;letter-spacing:-0.100px;'>C005</span>
<span class="t " style='left:71.21px;top:643px;font-size:12.5px;color:#605e5c;transform:scaleX(0.9802);transform-origin:0 0;letter-spacing:-0.100px;'>23</span>
<span class="t " style='left:190.75px;top:642px;font-size:11.5px;color:#333;letter-spacing:0.011px;font-style:italic;'>12/09/2025</span>
<span class="t " style='left:255.74px;top:642px;font-size:11.5px;color:#333;transform:scaleX(0.9160);transform-origin:0 0;letter-spacing:-0.100px;'>C006</span>
<span class="t " style='left:71.22px;top:664px;font-size:12.5px;color:#605e5c;transform:scaleX(0.9612);transform-origin:0 0;letter-spacing:-0.100px;'>24</span>
<span class="t " style='left:190.75px;top:663px;font-size:11.5px;color:#333;letter-spacing:0.011px;font-style:italic;'>13/09/2025</span>
<span class="t " style='left:255.74px;top:663px;font-size:11.5px;color:#333;transform:scaleX(0.9160);transform-origin:0 0;letter-spacing:-0.100px;'>C007</span>
<span class="t z" style='left:523.00px;top:161px;font-size:11.8px;color:#000;letter-spacing:0.036px;'>Advanced Editor</span>
<span class="t z thin" style='left:522.20px;top:215px;font-size:34.5px;color:#222;transform:scaleX(0.8016);transform-origin:0 0;letter-spacing:-0.100px;'>FactSales</span>
<span class="t z" style='left:1325.83px;top:225px;font-size:12.5px;color:#444;transform:scaleX(0.9735);transform-origin:0 0;letter-spacing:-0.100px;'>Display Options</span>
<span class="t z" style='left:1450.75px;top:225px;font-size:14px;color:#fff;font-weight:700;'>?</span>
<span class="t " style='left:255.90px;top:155px;font-size:9.6px;color:#555;transform:scaleX(0.8154);transform-origin:0 0;'>A</span>
<span class="t " style='left:261.25px;top:153px;font-size:9px;color:#555;transform:scaleX(0.7368);transform-origin:0 0;'>B</span>
<span class="t " style='left:265.24px;top:158px;font-size:9.8px;color:#555;transform:scaleX(0.7200);transform-origin:0 0;'>C</span>
<span class="t " style='left:415.38px;top:156px;font-size:10.5px;color:#555;transform:scaleX(0.6947);transform-origin:0 0;'>1</span>
<span class="t " style='left:420.51px;top:152px;font-size:10.5px;color:#555;transform:scaleX(0.7800);transform-origin:0 0;'>2</span>
<span class="t " style='left:425.15px;top:157px;font-size:10.8px;color:#555;transform:scaleX(0.9000);transform-origin:0 0;'>3</span>
<span class="t " style='left:1785.44px;top:-2px;font-size:13.5px;color:#fff;transform:scaleX(0.7407);transform-origin:0 0;font-weight:700;'>?</span>

</body></html>
